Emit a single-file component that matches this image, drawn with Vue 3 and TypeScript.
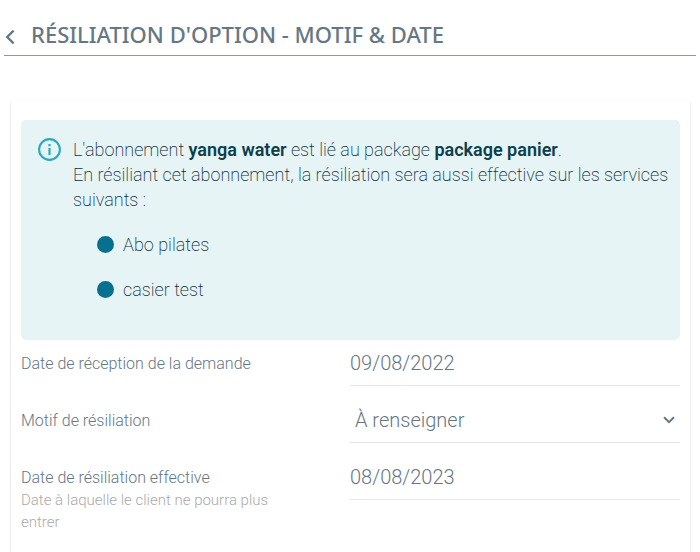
<script setup lang="ts">
import { ref } from 'vue'

const services: string[] = ['Abo pilates', 'casier test']
const receptionDate = ref('09/08/2022')
const effectiveDate = ref('08/08/2023')
const reason = ref('')
</script>

<template>
  <main class="page">
    <header class="header">
      <button class="back" type="button" aria-label="Retour">
        <svg width="10" height="16" viewBox="0 0 10 16" aria-hidden="true">
          <path d="M8.6 1.6 2.2 8l6.4 6.4" fill="none" stroke="currentColor" stroke-width="2.3" />
        </svg>
      </button>
      <h1 class="title">RÉSILIATION D'OPTION - MOTIF &amp; DATE</h1>
    </header>

    <section class="card">
      <div class="notice">
        <svg class="notice-icon" width="24" height="24" viewBox="0 0 24 24" aria-hidden="true">
          <circle cx="12.5" cy="12.5" r="10.4" fill="none" stroke="currentColor" stroke-width="2.1" />
          <path d="M12.5 11v7M12.5 7v2.2" fill="none" stroke="currentColor" stroke-width="2.2" />
        </svg>
        <div class="notice-body">
          <p>L'abonnement <strong>yanga water</strong> est lié au package <strong>package panier</strong>.</p>
          <p>En résiliant cet abonnement, la résiliation sera aussi effective sur les services suivants :</p>
          <ul class="services">
            <li v-for="service in services" :key="service">{{ service }}</li>
          </ul>
        </div>
      </div>

      <form class="form" @submit.prevent>
        <div class="row">
          <label class="label" for="reception">Date de réception de la demande</label>
          <input id="reception" v-model="receptionDate" class="control" type="text" />
        </div>
        <div class="row">
          <label class="label" for="reason">Motif de résiliation</label>
          <div class="select">
            <select id="reason" v-model="reason" class="control">
              <option value="">À renseigner</option>
            </select>
            <svg class="chevron" width="12" height="8" viewBox="0 0 12 8" aria-hidden="true">
              <path d="M1 1.2l5 5 5-5" fill="none" stroke="currentColor" stroke-width="2" />
            </svg>
          </div>
        </div>
        <div class="row">
          <label class="label" for="effective">
            Date de résiliation effective
            <small class="hint">Date à laquelle le client ne pourra plus entrer</small>
          </label>
          <input id="effective" v-model="effectiveDate" class="control" type="text" />
        </div>
      </form>
    </section>
  </main>
</template>

<style>
body {
  margin: 0;
  background: #fff;
}
</style>

<style scoped>
* {
  box-sizing: border-box;
}

.page {
  min-height: 100vh;
  display: flex;
  flex-direction: column;
  padding-top: 16px;
  color: #667784;
  font-family: Roboto, 'Liberation Sans', sans-serif;
  font-weight: 300;
}

.header {
  display: flex;
  align-items: flex-start;
  gap: 16px;
  height: 40px;
  margin: 0 4px;
  border-bottom: 1px solid #93989c;
}

.back {
  display: flex;
  padding: 13px 0 0 1px;
  border: 0;
  background: none;
  color: inherit;
  cursor: pointer;
}

.title {
  margin: 0;
  font-family: 'Noto Sans', sans-serif;
  font-size: 22px;
  font-weight: 500;
  line-height: 36px;
  white-space: nowrap;
}

.card {
  flex: 1;
  margin: 44px 10px 0 11px;
  padding: 20px 10px 0 9px;
  border-radius: 4px 4px 0 0;
  box-shadow: 0 1px 2px rgba(0, 0, 0, 0.25);
}

.notice {
  display: flex;
  align-items: flex-start;
  gap: 12px;
  margin-left: 1px;
  padding: 17px 8px 18px 16px;
  border-radius: 5px;
  background: #e6f4f6;
  color: #0a2e3a;
  font-size: 18px;
  font-weight: 200;
  line-height: 25px;
}

.notice-icon {
  flex: none;
  color: #2ba9bf;
}

.notice-body p {
  margin: 0;
}

.notice-body strong {
  color: #0d3f4b;
  font-weight: 600;
}

.services {
  margin: 20px 0 0;
  padding: 0 0 0 24px;
  list-style: none;
}

.services li {
  display: flex;
  align-items: center;
  gap: 9px;
  margin-bottom: 20px;
}

.services li::before {
  content: '';
  width: 17px;
  height: 17px;
  border-radius: 50%;
  background: #08708f;
}

.form {
  display: grid;
  gap: 11px;
}

.row {
  display: grid;
  grid-template-columns: 1fr 1fr;
  align-items: start;
}

.label {
  padding: 14px 60px 0 1px;
  font-size: 16px;
  line-height: 20px;
}

.hint {
  display: block;
  padding-top: 1px;
  color: #aaa;
  font-size: 15px;
  line-height: 22px;
}

.control {
  width: 100%;
  height: 46px;
  padding: 0;
  border: 0;
  border-bottom: 1px solid #e4e6e7;
  border-radius: 0;
  outline: 0;
  appearance: none;
  background: transparent;
  color: inherit;
  font: inherit;
  font-size: 20px;
}

.select {
  display: grid;
  align-items: center;
}

.select > * {
  grid-area: 1 / 1;
}

select.control {
  padding-left: 5px;
}

.chevron {
  justify-self: end;
  margin-right: 5px;
  pointer-events: none;
}
</style>
